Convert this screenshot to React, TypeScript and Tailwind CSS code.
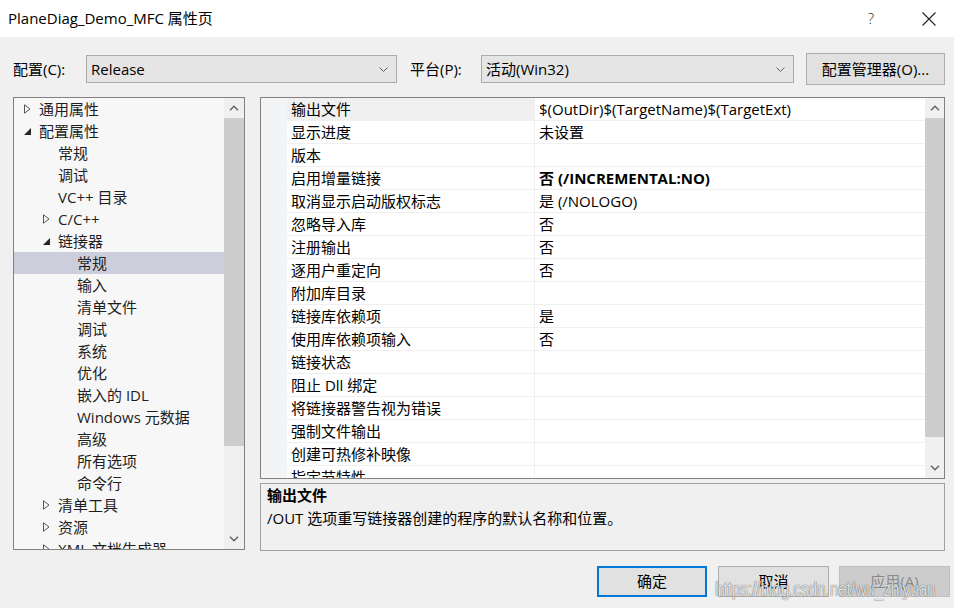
import React from 'react';

const font = 'font-["Open_Sans","Noto_Sans_CJK_SC",sans-serif]';

type TreeItem = { label: string; level: 0 | 1 | 2; tri?: 'open' | 'closed'; selected?: boolean };

const tree: TreeItem[] = [
  { label: '通用属性', level: 0, tri: 'closed' },
  { label: '配置属性', level: 0, tri: 'open' },
  { label: '常规', level: 1 },
  { label: '调试', level: 1 },
  { label: 'VC++ 目录', level: 1 },
  { label: 'C/C++', level: 1, tri: 'closed' },
  { label: '链接器', level: 1, tri: 'open' },
  { label: '常规', level: 2, selected: true },
  { label: '输入', level: 2 },
  { label: '清单文件', level: 2 },
  { label: '调试', level: 2 },
  { label: '系统', level: 2 },
  { label: '优化', level: 2 },
  { label: '嵌入的 IDL', level: 2 },
  { label: 'Windows 元数据', level: 2 },
  { label: '高级', level: 2 },
  { label: '所有选项', level: 2 },
  { label: '命令行', level: 2 },
  { label: '清单工具', level: 1, tri: 'closed' },
  { label: '资源', level: 1, tri: 'closed' },
  { label: 'XML 文档生成器', level: 1, tri: 'closed' },
  { label: '浏览信息', level: 1, tri: 'closed' },
];

const indent = { 0: 'pl-[6px]', 1: 'pl-[25px]', 2: 'pl-[44px]' };

const props: { name: string; value: string; bold?: boolean }[] = [
  { name: '输出文件', value: '$(OutDir)$(TargetName)$(TargetExt)' },
  { name: '显示进度', value: '未设置' },
  { name: '版本', value: '' },
  { name: '启用增量链接', value: '否 (/INCREMENTAL:NO)', bold: true },
  { name: '取消显示启动版权标志', value: '是 (/NOLOGO)' },
  { name: '忽略导入库', value: '否' },
  { name: '注册输出', value: '否' },
  { name: '逐用户重定向', value: '否' },
  { name: '附加库目录', value: '' },
  { name: '链接库依赖项', value: '是' },
  { name: '使用库依赖项输入', value: '否' },
  { name: '链接状态', value: '' },
  { name: '阻止 Dll 绑定', value: '' },
  { name: '将链接器警告视为错误', value: '' },
  { name: '强制文件输出', value: '' },
  { name: '创建可热修补映像', value: '' },
  { name: '指定节特性', value: '' },
];

const Chevron = ({ up }: { up?: boolean }) => (
  <svg width="10" height="6" viewBox="0 0 10 6">
    <path d={up ? 'M1 5.2 L5 1.2 L9 5.2' : 'M1 0.8 L5 4.8 L9 0.8'} fill="none" stroke="#606060" strokeWidth="1.4" />
  </svg>
);

const Triangle = ({ open }: { open: boolean }) =>
  open ? (
    <svg width="7" height="7" viewBox="0 0 7 7">
      <path d="M7 0 L7 7 L0 7 Z" fill="#262626" />
    </svg>
  ) : (
    <svg width="7" height="10" viewBox="0 0 7 10">
      <path d="M0.5 0.8 L6 5 L0.5 9.2 Z" fill="none" stroke="#555" strokeWidth="1" />
    </svg>
  );

const ScrollBar = ({ thumb, width }: { thumb: string; width: string }) => (
  <div className={`${width} flex flex-col bg-[#f0f0f0] shrink-0`}>
    <div className="h-[20px] flex items-center justify-center">
      <Chevron up />
    </div>
    <div className={`${thumb} bg-[#cdcdcd]`} />
    <div className="flex-1" />
    <div className="h-[20px] flex items-center justify-center">
      <Chevron />
    </div>
  </div>
);

const Combo = ({ text, width }: { text: string; width: string }) => (
  <div className={`${width} h-[28px] bg-[#e5e5e5] border border-[#acacac] flex items-center justify-between pl-[4px] pr-[8px]`}>
    <span>{text}</span>
    <svg width="9" height="5" viewBox="0 0 9 5">
      <path d="M0.5 0.5 L4.5 4.5 L8.5 0.5" fill="none" stroke="#606060" strokeWidth="1" />
    </svg>
  </div>
);

export default function App() {
  return (
    <div className={`${font} relative w-[954px] h-[608px] flex flex-col bg-[#f0f0f0] text-[15px] text-black overflow-hidden`}>
      {/* Title bar */}
      <div className="h-[37px] bg-white flex items-center justify-between pl-[8px] pr-[2px]">
        <span className="text-[15px]">PlaneDiag_Demo_MFC 属性页</span>
        <div className="flex items-center">
          <div className="w-[46px] mr-[12px] flex justify-center text-[15px] font-light text-[#222]">?</div>
          <div className="w-[46px] flex justify-center">
            <svg width="14" height="14" viewBox="0 0 14 14">
              <path d="M0.5 0.5 L13.5 13.5 M13.5 0.5 L0.5 13.5" stroke="#222" strokeWidth="1.1" />
            </svg>
          </div>
        </div>
      </div>

      <div className="flex-1 flex flex-col pl-[13px] pr-[9px]">
        {/* Configuration row */}
        <div className="mt-[16px] h-[32px] flex items-center">
          <span className="w-[73px]">配置(C):</span>
          <Combo text="Release" width="w-[311px]" />
          <span className="ml-[13px] w-[71px]">平台(P):</span>
          <Combo text="活动(Win32)" width="w-[313px]" />
          <div className="ml-[12px] w-[139px] h-[32px] bg-[#e1e1e1] border border-[#adadad] flex items-center justify-center">
            配置管理器(O)...
          </div>
        </div>

        {/* Main area */}
        <div className="mt-[12px] flex gap-[15px] h-[454px]">
          {/* Tree */}
          <div className="w-[232px] h-[453px] border border-[#828282] bg-[#f7f7f7] flex">
            <div className="flex-1 overflow-hidden text-[#1e1e1e]">
              {tree.map((t, i) => (
                <div
                  key={i}
                  className={`h-[22px] leading-[22px] flex items-center ${indent[t.level]} ${t.selected ? 'bg-[#cccedb]' : ''}`}
                >
                  <div className="w-[19px] shrink-0 flex items-center pl-[4px]">
                    {t.tri && <Triangle open={t.tri === 'open'} />}
                  </div>
                  <span className="whitespace-nowrap">{t.label}</span>
                </div>
              ))}
            </div>
            <ScrollBar width="w-[20px]" thumb="h-[328px]" />
          </div>

          {/* Right column */}
          <div className="flex-1 flex flex-col">
            <div className="h-[382px] border border-[#828282] bg-white flex">
              <div className="w-[26px] bg-[#f3f4f6] shrink-0" />
              <div className="flex-1 overflow-hidden">
                {props.map((p, i) => (
                  <div key={i} className="h-[23px] flex border-b border-[#f0f0f0]">
                    <div className={`w-[248px] shrink-0 pl-[4px] leading-[22px] border-r border-[#f0f0f0] whitespace-nowrap ${i === 0 ? 'bg-[#f0f0f0]' : ''}`}>
                      {p.name}
                    </div>
                    <div className={`flex-1 pl-[4px] leading-[22px] whitespace-nowrap ${p.bold ? 'font-bold' : ''}`}>
                      {p.value}
                    </div>
                  </div>
                ))}
              </div>
              <ScrollBar width="w-[19px]" thumb="h-[319px]" />
            </div>
            <div className="mt-[4px] h-[68px] border border-[#a0a0a0] bg-[#f0f0f0] pl-[6px] leading-[23px]">
              <div className="font-bold">输出文件</div>
              <div>/OUT 选项重写链接器创建的程序的默认名称和位置。</div>
            </div>
          </div>
        </div>

        {/* Buttons */}
        <div className="mt-[15px] flex justify-end -mr-[5px]">
          <div className="w-[110px] h-[31px] bg-[#e1e1e1] border-2 border-[#0078d7] flex items-center justify-center">确定</div>
          <div className="ml-[11px] w-[111px] h-[31px] bg-[#e1e1e1] border border-[#adadad] flex items-center justify-center">取消</div>
          <div className="ml-[10px] w-[111px] h-[31px] bg-[#cccccc] border border-[#bfbfbf] text-[#8a8a8a] flex items-center justify-center">应用(A)</div>
        </div>
      </div>

      {/* Watermark */}
      <div className='absolute left-[715px] top-[578px] origin-left scale-x-[0.76] font-["Liberation_Sans",sans-serif] text-[20px] leading-[23px] text-white/85 [text-shadow:0_0_1px_rgba(0,0,0,0.6),0_0_1px_rgba(0,0,0,0.4)] whitespace-nowrap pointer-events-none'>
        https://blog.csdn.net/wu_zhiyuan
      </div>
    </div>
  );
}
